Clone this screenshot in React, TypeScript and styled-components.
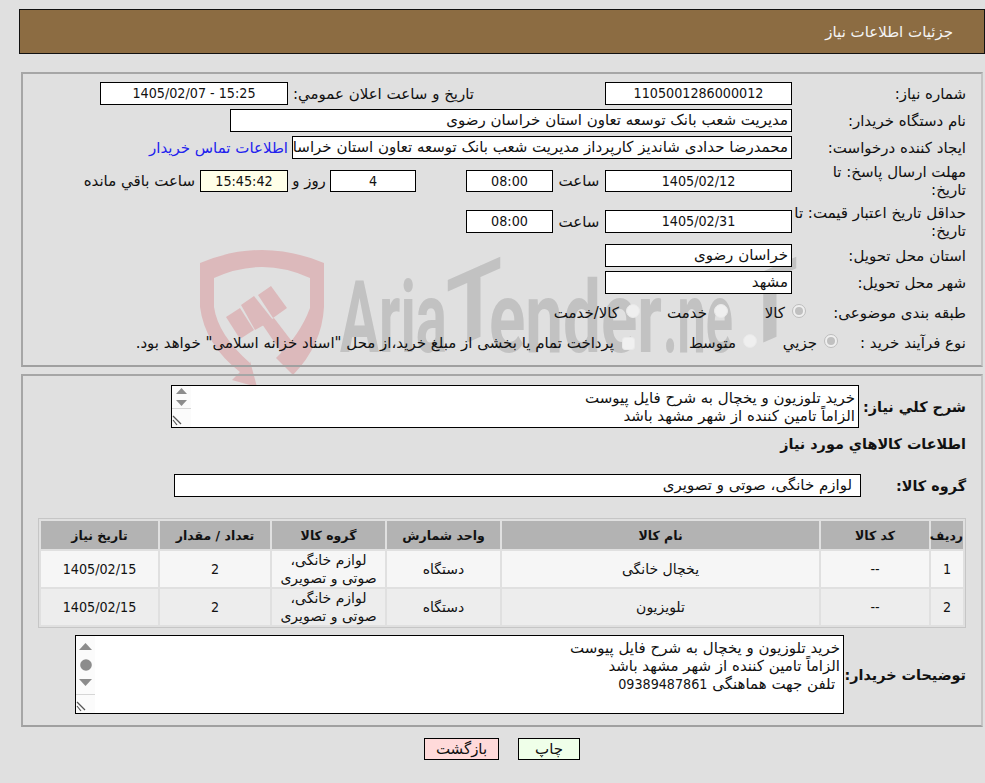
import React from "react";
import styled, { createGlobalStyle } from "styled-components";

const Global = createGlobalStyle`
  html, body { margin: 0; padding: 0; background: #e0e0e0; }
  body { font-family: "DejaVu Sans", sans-serif; font-size: 15px; color: #111; }
`;

const Page = styled.div`
  position: relative;
  isolation: isolate;
  width: 985px;
  height: 783px;
  overflow: hidden;
  direction: rtl;
  padding-top: 9px;
  box-sizing: border-box;
`;

const WatermarkSvg = styled.svg`
  position: absolute;
  top: 0;
  left: 0;
  z-index: -1;
`;

const MarkText = styled.text`
  font-family: Roboto, sans-serif;
  font-weight: 700;
  font-size: 100px;
  fill: #c2c2c2;
  direction: ltr;
`;

const Num = styled.span`
  font-family: "DejaVu Sans Condensed", "DejaVu Sans", sans-serif;
  font-size: 14.2px;
`;

const Header = styled.header`
  height: 45px;
  margin-left: 19px;
  padding-right: 31px;
  box-sizing: border-box;
  display: flex;
  align-items: center;
  background: #8c6c42;
  border: 1px solid #111;
  color: #f4f4f4;
  font-size: 15px;
`;

const Panel = styled.section<{ $top: number; $bottom: number; $pt: number }>`
  margin: ${(p) => p.$top}px 2px 0 21px;
  padding: ${(p) => p.$pt}px 15px ${(p) => p.$bottom}px 0;
  border: 2px solid #a6a6a6;
  border-right-color: #c4c4c4;
  border-bottom-color: #a0a0a0;
`;

const Row = styled.div<{ $h: number; $mt?: number }>`
  display: flex;
  align-items: center;
  height: ${(p) => p.$h}px;
  margin-top: ${(p) => p.$mt ?? 0}px;
`;

const Label = styled.div<{ $w: number; $bold?: boolean; $mr?: number }>`
  flex: none;
  width: ${(p) => p.$w}px;
  margin-right: ${(p) => p.$mr ?? 0}px;
  font-weight: ${(p) => (p.$bold ? 700 : 400)};
  font-size: ${(p) => (p.$bold ? 14.4 : 15)}px;
  line-height: 18px;
  white-space: nowrap;
`;

const Box = styled.div<{ $w: number; $h?: number; $center?: boolean; $tint?: boolean; $pr?: number; $mr?: number }>`
  flex: none;
  box-sizing: border-box;
  width: ${(p) => p.$w}px;
  height: ${(p) => p.$h ?? 23}px;
  margin-right: ${(p) => p.$mr ?? 0}px;
  padding: 0 ${(p) => p.$pr ?? 3}px 0 3px;
  border: 1px solid #000;
  background: ${(p) => (p.$tint ? "#ffffe8" : "#fff")};
  line-height: 21px;
  text-align: ${(p) => (p.$center ? "center" : "right")};
  white-space: nowrap;
  overflow: hidden;
`;

const Unit = styled.div<{ $w: number }>`
  flex: none;
  width: ${(p) => p.$w}px;
  text-align: center;
  white-space: nowrap;
`;

const ContactLink = styled.a`
  margin-right: 4px;
  color: #2222ee;
  white-space: nowrap;
  text-decoration: none;
`;

const Option = styled.label<{ $w?: number; $gap?: number }>`
  flex: none;
  display: flex;
  align-items: center;
  gap: ${(p) => p.$gap ?? 7}px;
  width: ${(p) => (p.$w ? `${p.$w}px` : "auto")};
  white-space: nowrap;
`;

const Radio = styled.span<{ $on?: boolean }>`
  flex: none;
  position: relative;
  top: -2px;
  width: 14px;
  height: 14px;
  box-sizing: border-box;
  border-radius: 50%;
  border: 1px solid ${(p) => (p.$on ? "#bdbdbd" : "#e9e9e9")};
  background: #efefef;
  display: flex;
  align-items: center;
  justify-content: center;
  &::after {
    content: "";
    width: 8px;
    height: 8px;
    border-radius: 50%;
    background: ${(p) => (p.$on ? "#c0c0c0" : "transparent")};
  }
`;

const Check = styled.span`
  flex: none;
  width: 13px;
  height: 13px;
  box-sizing: border-box;
  border: 1px solid #e9e9e9;
  border-radius: 3px;
  background: #f0f0f0;
`;

const Area = styled.div<{ $w: number; $h: number }>`
  position: relative;
  flex: none;
  box-sizing: border-box;
  width: ${(p) => p.$w}px;
  height: ${(p) => p.$h}px;
  padding: 3px 3px 0 0;
  border: 1px solid #000;
  background: #fff;
  line-height: 18px;
  white-space: pre-wrap;
  overflow: hidden;
`;

const Rail = styled.svg`
  position: absolute;
  top: 0;
  left: 0;
  background: #fbfbfb;
`;

const Heading = styled.h3`
  margin: 7px 0 0;
  height: 18px;
  font-size: 14.4px;
  font-weight: 700;
  line-height: 18px;
`;

const Table = styled.table`
  margin-top: 21px;
  width: 928px;
  table-layout: fixed;
  border-collapse: separate;
  border-spacing: 2px;
  border: 1px solid #c6c6c6;
  font-size: 14px;
`;

const Th = styled.th<{ $w: number }>`
  width: ${(p) => p.$w}px;
  height: 28px;
  padding: 0;
  background: #b3b3b3;
  font-size: 12.5px;
  font-weight: 700;
`;

const Td = styled.td<{ $alt?: boolean }>`
  height: 36px;
  padding: 0 3px;
  background: ${(p) => (p.$alt ? "#ededed" : "#f6f6f6")};
  line-height: 18px;
  text-align: center;
`;

const Actions = styled.div`
  display: flex;
  justify-content: center;
  gap: 19px;
  margin: 11px 2px 0 21px;
`;

const Btn = styled.button<{ $bg: string; $w: number }>`
  box-sizing: border-box;
  width: ${(p) => p.$w}px;
  height: 22px;
  padding: 0;
  border: 1px solid #000;
  background: ${(p) => p.$bg};
  color: #111;
  font: inherit;
  line-height: 20px;
`;

function Watermark() {
  return (
    <WatermarkSvg width={985} height={783} viewBox="0 0 985 783" aria-hidden>
      <g fill="#dcb9bb">
        <path d="M200 263 Q262 237 324 263 L324 307 Q322 345 293 375 L276 358 Q300 335 310 308 L310 278 Q262 256 214 278 L214 307 Q218 335 250 363 L250 361 L257 387 L232 380 L240 372 Q205 345 200 307 Z" />
        <path d="M226 317 L240 308 L254 330 L240 339 Z" />
        <path d="M241 305 L254 296 L273 320 L255 330 Z" />
        <path d="M258 295 L271 286 L287 308 L273 318 Z" />
        <path d="M262 324 L274 318 L300 352 L288 362 Z" />
      </g>
      <MarkText x={340} y={352} textLength={107} lengthAdjust="spacingAndGlyphs">Aria</MarkText>
      <MarkText x={0} y={0} transform="translate(446 352) skewY(-24)" textLength={56} lengthAdjust="spacingAndGlyphs">T</MarkText>
      <MarkText x={489} y={352} textLength={173} lengthAdjust="spacingAndGlyphs">ender</MarkText>
      <MarkText x={663} y={352} textLength={70} lengthAdjust="spacingAndGlyphs">.ne</MarkText>
      <MarkText x={0} y={0} transform="translate(742 352) skewY(-24)" textLength={56} lengthAdjust="spacingAndGlyphs">T</MarkText>
    </WatermarkSvg>
  );
}

function ScrollRail({ height, thumb }: { height: number; thumb?: boolean }) {
  const g = height - 19;
  return (
    <Rail width={19} height={height} viewBox={`0 0 19 ${height}`} aria-hidden>
      {thumb ? (
        <g fill="#8c8c8c">
          <path d="M3 14 L9.5 7 L16 14 Z" />
          <circle cx="10" cy="29" r="5.8" />
          <path d="M3 43 L16 43 L9.5 50 Z" />
        </g>
      ) : (
        <g fill="#8c8c8c">
          <path d="M4 8 L9.5 2 L15 8 Z" />
          <path d="M4 14 L15 14 L9.5 20 Z" />
        </g>
      )}
      <line x1="0" x2="19" y1={g + 0.5} y2={g + 0.5} stroke="#d6d6d6" />
      <g stroke="#555" strokeWidth="1.2" fill="none">
        <line x1="1" y1={g + 8} x2="9" y2={g + 16} />
        <line x1="1" y1={g + 12} x2="5" y2={g + 17} />
      </g>
    </Rail>
  );
}

const rows = [
  { n: "1", name: "یخچال خانگی", alt: false },
  { n: "2", name: "تلویزیون", alt: true },
];

export default function App() {
  return (
    <Page>
      <Global />
      <Watermark />
      <Header>جزئیات اطلاعات نیاز</Header>

      <Panel $top={18} $pt={8} $bottom={12}>
        <Row $h={23}>
          <Label $w={174}>شماره نیاز:</Label>
          <Box $w={187} $center><Num>1105001286000012</Num></Box>
          <Label $w={181} $mr={131}>تاريخ و ساعت اعلان عمومي:</Label>
          <Box $w={188} $mr={5} $center><Num>15:25 - 1405/02/07</Num></Box>
        </Row>
        <Row $h={23} $mt={4}>
          <Label $w={174}>نام دستگاه خریدار:</Label>
          <Box $w={562}>مدیریت شعب بانک توسعه تعاون استان خراسان رضوی</Box>
        </Row>
        <Row $h={23} $mt={4}>
          <Label $w={174}>ایجاد کننده درخواست:</Label>
          <Box $w={500}>محمدرضا حدادی شاندیز کارپرداز مدیریت شعب بانک توسعه تعاون استان خراسان رضوی</Box>
          <ContactLink href="#">اطلاعات تماس خریدار</ContactLink>
        </Row>
        <Row $h={22} $mt={11}>
          <Label $w={174}>مهلت ارسال پاسخ: تا<br />تاریخ:</Label>
          <Box $w={187} $h={22} $center><Num>1405/02/12</Num></Box>
          <Unit $w={52}>ساعت</Unit>
          <Box $w={87} $h={22} $center><Num>08:00</Num></Box>
          <Box $w={86} $h={22} $mr={50} $center><Num>4</Num></Box>
          <Unit $w={42}>روز و</Unit>
          <Box $w={88} $h={22} $center $tint><Num>15:45:42</Num></Box>
          <Label $w={112} $mr={5}>ساعت باقي مانده</Label>
        </Row>
        <Row $h={23} $mt={18}>
          <Label $w={174}>حداقل تاریخ اعتبار قیمت: تا<br />تاریخ:</Label>
          <Box $w={187} $center><Num>1405/02/31</Num></Box>
          <Unit $w={52}>ساعت</Unit>
          <Box $w={87} $center><Num>08:00</Num></Box>
        </Row>
        <Row $h={23} $mt={11}>
          <Label $w={174}>استان محل تحویل:</Label>
          <Box $w={187}>خراسان رضوی</Box>
        </Row>
        <Row $h={23} $mt={4}>
          <Label $w={174}>شهر محل تحویل:</Label>
          <Box $w={187}>مشهد</Box>
        </Row>
        <Row $h={20} $mt={9}>
          <Label $w={160}>طبقه بندی موضوعی:</Label>
          <Option $w={78}><Radio $on />کالا</Option>
          <Option $w={88}><Radio />خدمت</Option>
          <Option><Radio />کالا/خدمت</Option>
        </Row>
        <Row $h={20} $mt={10}>
          <Label $w={128}>نوع فرآیند خرید :</Label>
          <Option $w={81}><Radio $on />جزيي</Option>
          <Option $w={122}><Radio />متوسط</Option>
          <Option $gap={8}><Check />پرداخت تمام یا بخشی از مبلغ خرید،از محل "اسناد خزانه اسلامی" خواهد بود.</Option>
        </Row>
      </Panel>

      <Panel $top={7} $pt={9} $bottom={11}>
        <Row $h={43}>
          <Label $w={107} $bold>شرح کلي نياز:</Label>
          <Area $w={688} $h={43}>
            {"خرید تلوزیون و یخچال به شرح فایل پیوست\nالزاماً تامین کننده از شهر مشهد باشد"}
            <ScrollRail height={41} />
          </Area>
        </Row>
        <Heading>اطلاعات کالاهاي مورد نياز</Heading>
        <Row $h={23} $mt={21}>
          <Label $w={105} $bold>گروه کالا:</Label>
          <Box $w={687} $pr={8}>لوازم خانگی، صوتی و تصویری</Box>
        </Row>
        <Table>
          <thead>
            <tr>
              <Th $w={32}>ردیف</Th>
              <Th $w={108}>کد کالا</Th>
              <Th $w={317}>نام کالا</Th>
              <Th $w={113}>واحد شمارش</Th>
              <Th $w={113}>گروه کالا</Th>
              <Th $w={110}>تعداد / مقدار</Th>
              <Th $w={117}>تاریخ نیاز</Th>
            </tr>
          </thead>
          <tbody>
            {rows.map((r) => (
              <tr key={r.n}>
                <Td $alt={r.alt}><Num>{r.n}</Num></Td>
                <Td $alt={r.alt}><Num>--</Num></Td>
                <Td $alt={r.alt}>{r.name}</Td>
                <Td $alt={r.alt}>دستگاه</Td>
                <Td $alt={r.alt}>لوازم خانگی،<br />صوتی و تصویری</Td>
                <Td $alt={r.alt}><Num>2</Num></Td>
                <Td $alt={r.alt}><Num>1405/02/15</Num></Td>
              </tr>
            ))}
          </tbody>
        </Table>
        <Row $h={79} $mt={7}>
          <Label $w={122} $bold>توضیحات خریدار:</Label>
          <Area $w={769} $h={79}>
            خرید تلوزیون و یخچال به شرح فایل پیوست{"\n"}الزاماً تامین کننده از شهر مشهد باشد{"\n"} تلفن جهت هماهنگی <Num>09389487861</Num>
            <ScrollRail height={77} thumb />
          </Area>
        </Row>
      </Panel>

      <Actions>
        <Btn $bg="#efffe9" $w={62}>چاپ</Btn>
        <Btn $bg="#ffdada" $w={75}>بازگشت</Btn>
      </Actions>
    </Page>
  );
}
